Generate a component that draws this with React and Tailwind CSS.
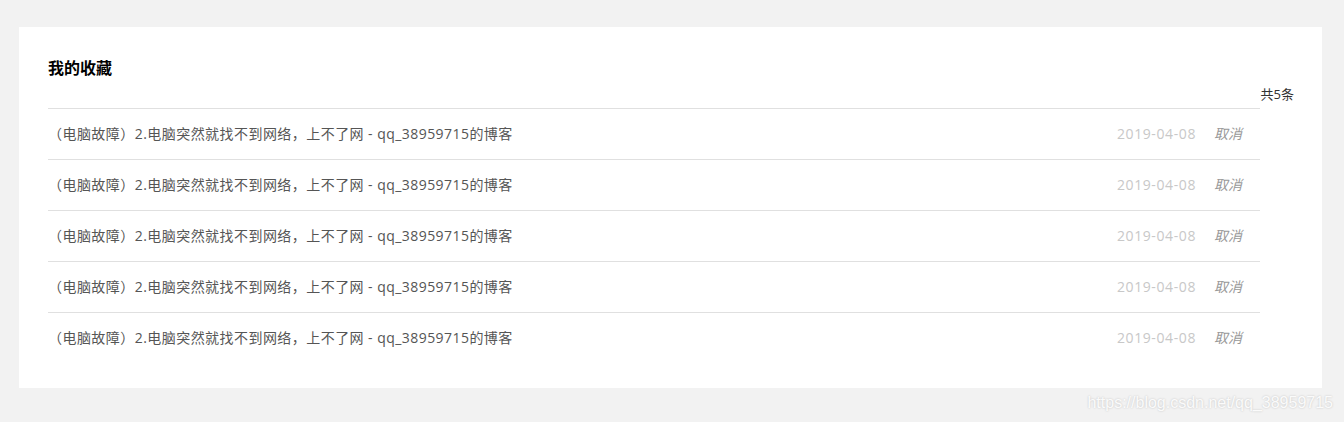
const items = Array.from({ length: 5 }, (_, i) => ({
  id: i,
  title: '（电脑故障）2.电脑突然就找不到网络，上不了网 - qq_38959715的博客',
  date: '2019-04-08',
}))

export default function App() {
  return (
    <div
      className="relative h-[422px] bg-[#f2f2f2] pt-[27px] pl-[19px]"
      style={{ fontFamily: '"Open Sans", "Noto Sans CJK SC", sans-serif' }}
    >
      <div className="w-[1303px] h-[361px] bg-white pt-[30px] pl-[29px] pr-[28px]">
        <h2 className="text-base font-bold leading-[22px] text-black">我的收藏</h2>
        <p className="mt-[6px] text-right text-[13px] leading-[18px] text-[#333]">共5条</p>
        <ul className="mt-[5px] mr-[34px]">
          {items.map((item) => (
            <li
              key={item.id}
              className="flex h-[51px] items-center border-t border-[#e0e0e0] pr-[18px] text-sm"
            >
              <span className="flex-1 tracking-[0.45px] text-[#555]">{item.title}</span>
              <span className="tracking-[0.6px] text-[#c8c8c8]">{item.date}</span>
              <span className="ml-[18px] italic text-[#999]">取消</span>
            </li>
          ))}
        </ul>
      </div>
      {/* watermark */}
      <div
        className="absolute right-[11px] bottom-[9px] text-[16px] leading-[20px] text-white/90"
        style={{ fontFamily: '"Liberation Sans", Arial, sans-serif', textShadow: '0 0 2px #bbb' }}
      >
        https://blog.csdn.net/qq_38959715
      </div>
    </div>
  )
}
